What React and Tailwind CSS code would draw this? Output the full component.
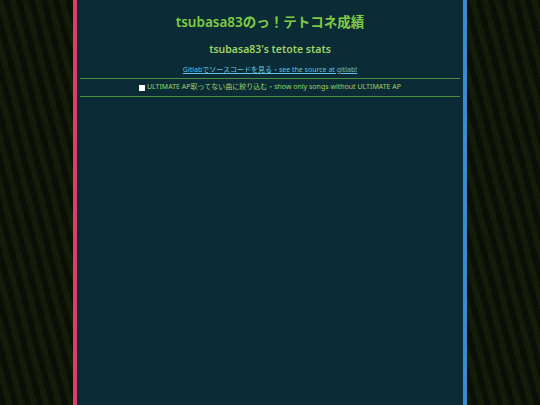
import React from 'react'

function App() {
    return (
        <div className="min-h-screen w-full bg-[repeating-linear-gradient(75deg,#0a1005_0px,#0a1005_6px,#121c09_6px,#121c09_12px)] flex justify-center" style={{ fontFamily: '"Noto Sans", "Noto Sans CJK JP", sans-serif' }}>
            <div className="w-[394px] min-h-screen bg-[#0b2b36] border-l-4 border-l-[#d8406a] border-r-4 border-r-[#3a8ad6] px-[3px] flex flex-col items-center">
                {/* titles */}
                <h1 className="mt-[12px] text-[13.5px] font-semibold text-[#7fcb45] leading-[20px]">
                    tsubasa83のっ！テトコネ成績
                </h1>
                <h2 className="mt-[9px] text-[10.5px] font-semibold text-[#9bd462] leading-[16px]">
                    tsubasa83's tetote stats
                </h2>
                <a href="#" className="mt-[8px] text-[7px] text-[#5ec3df] underline leading-[10px]">
                    Gitlabでソースコードを見る・see the source at gitlab!
                </a>
                <hr className="mt-[3px] w-full border-0 border-t border-t-[#4f8f3c]" />
                <label className="h-[17px] flex items-center gap-[2px] text-[7px] text-[#9bd462]">
                    <span className="inline-block w-[6px] h-[6px] bg-white" />
                    ULTIMATE AP取ってない曲に絞り込む・show only songs without ULTIMATE AP
                </label>
                <hr className="w-full border-0 border-t border-t-[#4f8f3c]" />
            </div>
        </div>
    )
}

export default App
